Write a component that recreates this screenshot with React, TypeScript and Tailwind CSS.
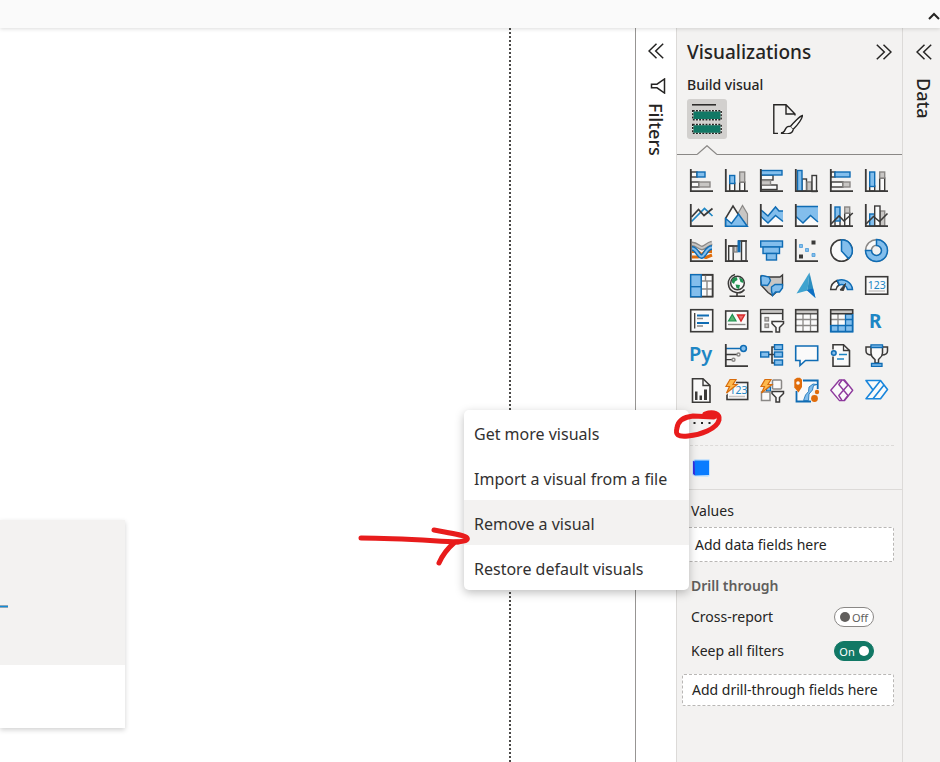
import React, { useState } from 'react';
import clsx from 'clsx';

const DARK = '#3b3a39';
const BLUE = '#0f6cb4';
const SKY = '#83beec';
const GRAY = '#c8c6c4';
const MID = '#8a8886';
const WHITE = '#fafafa';
const ORANGE = '#e06c0a';
const TEAL = '#1e86c4';

interface BarProps {
  x: number;
  y: number;
  w: number;
  h: number;
  tone?: 'white' | 'blue' | 'gray';
}

const Bar: React.FC<BarProps> = ({ x, y, w, h, tone = 'white' }) => {
  const fill = { white: WHITE, blue: SKY, gray: GRAY }[tone];
  const stroke = { white: DARK, blue: BLUE, gray: MID }[tone];
  return <rect x={x} y={y} width={w} height={h} fill={fill} stroke={stroke} strokeWidth="1.4" />;
};

const Axis = () => <path d="M.8 0V22.2H23" fill="none" stroke={DARK} strokeWidth="1.8" />;

const Bolt = () => <path d="M5 .5h6L8 5.5h4L1.5 14l3-6.5H1z" fill="#fdb94d" stroke="#d86c0b" strokeWidth="1.2" />;

const Funnel = () => (
  <path d="M12 12.5h11.500v2l-4 4V23h-3.500v-4.500l-4-4z" fill={WHITE} stroke={DARK} strokeWidth="1.5" />
);

interface Visual {
  name: string;
  art: React.ReactNode;
}

const visuals: Visual[] = [
  {
    name: 'Stacked bar chart',
    art: <><Bar x={1} y={3} w={6} h={5} /><Bar x={7} y={3} w={8} h={5} tone="blue" /><Bar x={1} y={13} w={8} h={5} /><Bar x={9} y={13} w={11} h={5} tone="gray" /><Axis /></>
  },
  {
    name: 'Stacked column chart',
    art: <><Bar x={4.7} y={14} w={5} h={8} /><Bar x={4.7} y={6.5} w={5} h={8} tone="blue" /><Bar x={14.7} y={13} w={5} h={9} /><Bar x={14.7} y={3} w={5} h={10} tone="gray" /><Axis /></>
  },
  {
    name: 'Clustered bar chart',
    art: <><Bar x={1} y={6} w={12} h={5} /><Bar x={1} y={16} w={16} h={4.5} /><Bar x={1} y={11.5} w={9.5} h={4.5} tone="gray" /><Bar x={1} y={1.5} w={21} h={4.5} tone="blue" /><Axis /></>
  },
  {
    name: 'Clustered column chart',
    art: <><Bar x={7} y={10} w={4.5} h={12} /><Bar x={12} y={13} w={4.5} h={9} tone="gray" /><Bar x={17} y={6.5} w={4.5} h={16} /><Bar x={2.5} y={1.5} w={4.5} h={20.5} tone="blue" /><Axis /></>
  },
  {
    name: '100% stacked bar chart',
    art: <><Bar x={1} y={3} w={4} h={5} /><Bar x={5} y={3} w={15} h={5} tone="blue" /><Bar x={1} y={13} w={12} h={5} /><Bar x={13} y={13} w={7} h={5} tone="gray" /><Axis /></>
  },
  {
    name: '100% stacked column chart',
    art: <><Bar x={4.7} y={17} w={5} h={5} /><Bar x={4.7} y={3} w={5} h={14.5} tone="blue" /><Bar x={14.7} y={9} w={5} h={13} /><Bar x={14.7} y={3} w={5} h={6} tone="gray" /><Axis /></>
  },
  {
    name: 'Line chart',
    art: (
      <>
        <path d="M1.500 17.500 14.500 4.500 22.500 12" fill="none" stroke={TEAL} strokeWidth="1.700" />
        <path d="M1.500 13 8.500 5.500 14 11.500 22.500 4.500" fill="none" stroke={DARK} strokeWidth="1.700" />
        <Axis />
      </>
    )
  },
  {
    name: 'Area chart',
    art: (
      <>
        <path d="M11 13 17.500 1.500 22.500 10V21H16z" fill={GRAY} stroke={MID} strokeWidth="1.200" />
        <path d="M.5 14.500 8 2 15 13V22H.5z" fill={WHITE} stroke={DARK} strokeWidth="1.500" />
        <path d="M.7 14.500 6.500 19.500 13.500 10 22.300 22.200H.7z" fill={SKY} stroke={BLUE} strokeWidth="1.500" />
      </>
    )
  },
  {
    name: 'Stacked area chart',
    art: (
      <>
        <path d="M1 12 8 19 15 12 22.500 18V22H1z" fill={WHITE} />
        <path d="M1 6 8 12 15.500 3 19 7H23V17.500L15.500 11.500 8 19 1 12.500z" fill={SKY} />
        <path d="M1 6 8 12 15.500 3 19 7H23M23 17.500 15.500 11.500 8 19 1 12.500" fill="none" stroke={BLUE} strokeWidth="1.500" />
        <Axis />
      </>
    )
  },
  {
    name: '100% stacked area chart',
    art: (
      <>
        <path d="M1 12V22H23V17z" fill={WHITE} />
        <path d="M1 2.500H23V18L15.500 11.500 8 19 1 12.500z" fill={SKY} />
        <path d="M1 2.500H23M23 18 15.500 11.500 8 19 1 12.500" fill="none" stroke={BLUE} strokeWidth="1.500" />
        <Axis />
      </>
    )
  },
  {
    name: 'Line and stacked column chart',
    art: (
      <>
        <Bar x={5} y={16} w={5} h={6} /><Bar x={5} y={3} w={5} h={14} tone="blue" />
        <Bar x={14.7} y={9} w={5} h={13} /><Bar x={14.7} y={3} w={5} h={6} tone="gray" />
        <path d="M1 20 9 12 14 17 22.800 9" fill="none" stroke={DARK} strokeWidth="1.600" />
        <Axis />
      </>
    )
  },
  {
    name: 'Line and clustered column chart',
    art: (
      <>
        <Bar x={4.7} y={10} w={5} h={12} tone="blue" /><Bar x={15} y={7} w={4.7} h={15} tone="gray" />
        <Bar x={9.7} y={2} w={5.3} h={20} />
        <path d="M1 20 8.500 12.500 14.500 17.500 22.500 9.500" fill="none" stroke={DARK} strokeWidth="1.600" />
        <Axis />
      </>
    )
  },
  {
    name: 'Ribbon chart',
    art: (
      <>
        <path d="M2 12.500H7C10 12.500 13 19 16 18.500L22 16" fill="none" stroke={ORANGE} strokeWidth="3" />
        <path d="M2 18H8C12 18 13 11.500 17 12.500H22" fill="none" stroke={ORANGE} strokeWidth="3" />
        <path d="M2 5C7 5 9 9 12 9S17 5 22 4" fill="none" stroke={MID} strokeWidth="4.800" />
        <path d="M2 5C7 5 9 9 12 9S17 5 22 4" fill="none" stroke={GRAY} strokeWidth="2" />
        <path d="M2 9.500C7 9.500 8 17.500 11.500 17.500S16 8.500 22 8.500" fill="none" stroke={BLUE} strokeWidth="4.800" />
        <path d="M2 9.500C7 9.500 8 17.500 11.500 17.500S16 8.500 22 8.500" fill="none" stroke={SKY} strokeWidth="2" />
        <Axis />
      </>
    )
  },
  {
    name: 'Waterfall chart',
    art: (
      <>
        <Bar x={3.7} y={7} w={4.5} h={15} /><Bar x={9} y={7} w={3} h={6} tone="gray" />
        <Bar x={16.5} y={2} w={4.5} h={20} />
        <path d="M3 7H13M13 2H22" stroke={DARK} strokeWidth="1.400" />
        <rect x="12.500" y="1.300" width="3" height="12" fill={BLUE} />
        <Axis />
      </>
    )
  },
  {
    name: 'Funnel',
    art: <><Bar x={0.7} y={2} w={21.8} h={6} tone="blue" /><Bar x={3} y={8} w={16.5} h={6.5} tone="blue" /><Bar x={6.5} y={14.5} w={10} h={6.5} tone="blue" /></>
  },
  {
    name: 'Scatter chart',
    art: (
      <>
        <path d="M16.500 1.500h4v4h-4zM4 15.500h4v4h-4z" fill={DARK} />
        <path d="M4.500 5.500h3v3h-3zM10.500 9.500h3v3h-3zM17 14.500h3v3h-3z" fill={SKY} stroke="#4a9bd8" strokeWidth=".8" />
        <Axis />
      </>
    )
  },
  {
    name: 'Pie chart',
    art: (
      <>
        <circle cx="11.500" cy="11.500" r="10.700" fill={WHITE} stroke={DARK} strokeWidth="1.600" />
        <path d="M11.500.8A10.700 10.700 0 0 1 18.500 19.600L11.500 12z" fill={SKY} stroke={BLUE} strokeWidth="1.500" />
      </>
    )
  },
  {
    name: 'Donut chart',
    art: (
      <>
        <circle cx="11.500" cy="11.500" r="8" fill="none" stroke={MID} strokeWidth="7.200" />
        <circle cx="11.500" cy="11.500" r="8" fill="none" stroke={WHITE} strokeWidth="4.200" />
        <path d="M11.500.5A11 11 0 1 1 .5 11.500H6.500A5 5 0 1 0 11.500 6.500z" fill={SKY} stroke={BLUE} strokeWidth="1.500" />
      </>
    )
  },
  {
    name: 'Treemap',
    art: (
      <>
        <Bar x={11} y={1} w={11.5} h={21.5} />
        <path d="M11 7H22.500M17 7V22M11 15H17M17 15H22.500M15.500 1V7" stroke={MID} strokeWidth="1.400" />
        <rect x=".7" y=".7" width="22" height="22" fill="none" stroke={DARK} strokeWidth="1.600" />
        <Bar x={0.7} y={0.7} w={10.5} h={12} tone="blue" /><Bar x={0.7} y={12.7} w={10.5} h={10} tone="blue" />
      </>
    )
  },
  {
    name: 'Map',
    art: (
      <>
        <circle cx="12.500" cy="9" r="6.800" fill={WHITE} stroke={DARK} strokeWidth="1.500" />
        <path d="M7 6C8 3.500 11 3 12 3.500L12.500 6 10 7.500 9 10 7 8.500zM14 3.500 17.500 5 18.500 9 15.500 8zM10.500 10.500 15 11 14 15 11.500 14z" fill="#1f9150" />
        <path d="M10 .5C1 3 1 16.500 11 18.500 15 19.500 18 17.500 19.500 15.500M12 18.500V22M4.500 22.300H20" fill="none" stroke={DARK} strokeWidth="1.600" />
      </>
    )
  },
  {
    name: 'Filled map',
    art: (
      <>
        <path d="M1 2 9 3H20L22.500 1V12L17 17.500 12.500 21.500 8 18.500 1 11z" fill={GRAY} stroke={DARK} strokeWidth="1.400" />
        <path d="M.8 3.500 2 1.500 9 3 10.500 6.500 9 9.500 7.500 11.500 1.500 11z" fill={SKY} stroke={BLUE} strokeWidth="1.400" />
        <path d="M11.500 13 15 10.500H22.500V14L19.500 18 15.500 18 12.500 21.500 11.500 17z" fill={SKY} stroke={BLUE} strokeWidth="1.400" />
      </>
    )
  },
  {
    name: 'Azure map',
    art: (
      <>
        <path d="M14.500-1.500 1.500 19.500 12.500 16.500z" fill="#3fa3cf" />
        <path d="M14.500-1.500 20.500 24 12.500 16.500z" fill="#2d8fc0" />
        <path d="M11.500 16 18 14.500 20.500 24z" fill="#0f70c4" />
      </>
    )
  },
  {
    name: 'Gauge',
    art: (
      <>
        <path d="M.7 15.500A10.800 10.300 0 0 1 7 6.500L9 11A6 6 0 0 0 6 15.500z" fill={WHITE} stroke={DARK} strokeWidth="1.500" />
        <path d="M7.500 6.500A11 10.500 0 0 1 22.500 15.500H17.500A6 6 0 0 0 9.500 11z" fill={SKY} stroke={BLUE} strokeWidth="1.500" />
        <path d="M10 16 15.500 9.500 13.500 16.500z" fill={DARK} stroke={DARK} strokeWidth="1" />
      </>
    )
  },
  {
    name: 'Card',
    art: (
      <>
        <rect x=".7" y="2.700" width="22" height="17.500" fill={WHITE} stroke={DARK} strokeWidth="1.600" />
        <text x="11.700" y="14.500" textAnchor="middle" fontSize="10.500" fill={TEAL}>123</text>
        <path d="M3.500 17H20" stroke={GRAY} strokeWidth="1.500" />
      </>
    )
  },
  {
    name: 'Multi-row card',
    art: (
      <>
        <rect x=".7" y=".7" width="22" height="22" fill={WHITE} stroke={DARK} strokeWidth="1.600" />
        <path d="M4.700 4V19.500" stroke={DARK} strokeWidth="1.300" />
        <path d="M7 6.500H19M7 14H19" stroke={BLUE} strokeWidth="2.200" />
        <path d="M7 9.500H13M7 17H13" stroke={MID} strokeWidth="1.500" />
      </>
    )
  },
  {
    name: 'KPI',
    art: (
      <>
        <rect x=".7" y="2" width="22" height="18" fill={WHITE} stroke={DARK} strokeWidth="1.600" />
        <path d="M3.500 12 7.300 5.500 11 12z" fill="#5bb772" stroke="#1f9150" strokeWidth="1.200" />
        <path d="M12.500 6H19.500L16 12z" fill="#ee6c6c" stroke="#d62b2b" strokeWidth="1.400" />
        <path d="M3 15.500H20.500" stroke={MID} strokeWidth="1.400" />
      </>
    )
  },
  {
    name: 'Slicer',
    art: (
      <>
        <rect x=".7" y=".7" width="22" height="22" fill={WHITE} stroke={DARK} strokeWidth="1.600" />
        <path d="M1.400 1.400H22V4H1.400z" fill={GRAY} />
        <path d="M1 4.500H22.500" stroke={DARK} strokeWidth="1.300" />
        <rect x="5" y="8.500" width="3.500" height="3.500" fill={GRAY} stroke={MID} strokeWidth="1.300" />
        <rect x="5" y="15" width="3.500" height="3.500" fill={GRAY} stroke={MID} strokeWidth="1.300" />
        <path d="M10.500 11H24.500V24H13z" fill="#f3f2f1" />
        <Funnel />
      </>
    )
  },
  {
    name: 'Table',
    art: (
      <>
        <rect x=".7" y=".7" width="22" height="22" fill={WHITE} />
        <path d="M1 1H22V4.500H1z" fill={GRAY} />
        <path d="M1 10.500H22.500M1 16.500H22.500M8 5V22.500M15.500 5V22.500" stroke={MID} strokeWidth="1.300" />
        <rect x=".7" y=".7" width="22" height="22" fill="none" stroke={DARK} strokeWidth="1.600" />
        <path d="M1 4.800H22.500" stroke={DARK} strokeWidth="1.300" />
      </>
    )
  },
  {
    name: 'Matrix',
    art: (
      <>
        <rect x=".7" y=".7" width="22" height="22" fill={WHITE} />
        <path d="M1 1H22V4.500H1z" fill={GRAY} />
        <path d="M1 10.500H15.500M8 5V16.500" stroke={MID} strokeWidth="1.300" />
        <path d="M15.500 5H22.500V22.500H1V16.500H15.500z" fill={SKY} stroke={BLUE} strokeWidth="1.300" />
        <path d="M15.500 10.500H22.500M15.500 16.500H22.500M8 16.500V22.500M15.500 16.500V22.500" stroke={BLUE} strokeWidth="1.300" />
        <path d="M.7 16V.7H22.700V5M.7 4.800H22.700" fill="none" stroke={DARK} strokeWidth="1.600" />
        <path d="M22.700 5V22.700H.7V16" fill="none" stroke={BLUE} strokeWidth="1.600" />
      </>
    )
  },
  {
    name: 'R script visual',
    art: <text x="4" y="18.500" fontSize="19" fontWeight="700" fill={TEAL}>R</text>
  },
  {
    name: 'Python visual',
    art: <text x="-1" y="17" fontSize="20" fontWeight="600" fill={TEAL}>Py</text>
  },
  {
    name: 'Key influencers',
    art: (
      <>
        <path d="M1 4.500H16" stroke={BLUE} strokeWidth="1.500" />
        <path d="M1 10.500H12M1 15.700H7" stroke={DARK} strokeWidth="1.300" />
        <circle cx="18.500" cy="4.500" r="2.900" fill={SKY} stroke={BLUE} strokeWidth="1.500" />
        <circle cx="13.500" cy="10.500" r="1.500" fill={WHITE} stroke={MID} strokeWidth="1.400" />
        <circle cx="8.500" cy="15.700" r="1.500" fill={WHITE} stroke={MID} strokeWidth="1.400" />
        <Axis />
      </>
    )
  },
  {
    name: 'Decomposition tree',
    art: (
      <>
        <path d="M8 10.500H15M15 3H12V19H15" fill="none" stroke={DARK} strokeWidth="1.600" />
        <Bar x={0.7} y={8} w={8} h={5} tone="blue" />
        <Bar x={14.5} y={0.7} w={8} h={5} tone="blue" /><Bar x={14.5} y={8} w={8} h={5} tone="blue" /><Bar x={14.5} y={16} w={8} h={5} tone="blue" />
      </>
    )
  },
  {
    name: 'Q&A',
    art: <path d="M.7 2H22.700V16.500H10.500L5 21.500V16.500H.7z" fill={WHITE} stroke={BLUE} strokeWidth="1.600" />
  },
  {
    name: 'Smart narrative',
    art: (
      <>
        <path d="M3 .7H13.500L19.500 6.500V22.300H3z" fill={WHITE} stroke={DARK} strokeWidth="1.600" />
        <path d="M13.500.7V6.500H19.500" fill="none" stroke={DARK} strokeWidth="1.300" />
        <path d="M9 10.500H17M7 15H14" stroke={TEAL} strokeWidth="1.500" />
        <path d="M2 5.500H5V12.500H2z" fill="#f3f2f1" />
        <circle cx="3.800" cy="9" r="2.300" fill={SKY} stroke={BLUE} strokeWidth="1.500" />
      </>
    )
  },
  {
    name: 'Goals',
    art: (
      <>
        <path d="M6 3H1V7C1 10.500 4 11 7 11M17.500 3H22.500V7C22.500 10.500 19.500 11 16.500 11" fill="none" stroke={DARK} strokeWidth="1.500" />
        <path d="M6 2.500H17.500V9C17.500 13 14 14.500 13.500 15.500V19H10V15.500C9 14.500 6 13 6 9z" fill={WHITE} stroke={DARK} strokeWidth="1.500" />
        <path d="M6 .8H17.500V3.500H6zM6.500 19.500H17V22.300H6.500z" fill={SKY} stroke={BLUE} strokeWidth="1.300" />
      </>
    )
  },
  {
    name: 'Paginated report',
    art: (
      <>
        <path d="M2.500-.3H13L20 6.500V23.300H2.500z" fill={WHITE} stroke={DARK} strokeWidth="1.600" />
        <path d="M13 0V6.500H20" fill="none" stroke={DARK} strokeWidth="1.400" />
        <path d="M5 12.500h2.500V21H5zM9.500 16.500H12V21H9.500zM14 10.500h3V21h-3z" fill={DARK} />
      </>
    )
  },
  {
    name: 'Card (new)',
    art: (
      <>
        <rect x="2" y="3.500" width="20.700" height="17" fill={WHITE} stroke={DARK} strokeWidth="1.600" />
        <path d="M-1-2H12L10 8 0 17z" fill="#f3f2f1" />
        <text x="13.500" y="15" textAnchor="middle" fontSize="10.500" fill={TEAL}>123</text>
        <path d="M4 17.500H20" stroke={GRAY} strokeWidth="1.500" />
        <Bolt />
      </>
    )
  },
  {
    name: 'Slicer (new)',
    art: (
      <>
        <rect x="12.500" y="1" width="9" height="9" rx="1" fill={WHITE} stroke={MID} strokeWidth="1.500" />
        <rect x="6.500" y="8" width="4" height="4" fill={SKY} stroke={BLUE} strokeWidth="1.200" />
        <rect x="1.500" y="13" width="8.500" height="8.500" fill={WHITE} stroke={MID} strokeWidth="1.500" />
        <Bolt />
        <Funnel />
      </>
    )
  },
  {
    name: 'ArcGIS map',
    art: (
      <>
        <path d="M2 2H22.500V9L18 12 15.500 22.300H1.500V9z" fill={WHITE} />
        <path d="M8 1.500H22.700V10M1.500 12V22.500H16" fill="none" stroke={BLUE} strokeWidth="1.800" />
        <path d="M22 5.500 18.500 6.500 17.500 11 14 15 13.500 21.500H8.500L10.500 16 13.500 12.500 14 8 18 5z" fill={SKY} stroke={BLUE} strokeWidth=".8" />
        <path d="M-.7.500 2-1.200H5L7 .8V8L3.500 13.500-.7 8.500z" fill={ORANGE} />
        <circle cx="3" cy="4" r="1.800" fill={WHITE} />
        <circle cx="19.500" cy="19.500" r="4.300" fill="#f3f2f1" />
        <circle cx="19.500" cy="19.500" r="3.400" fill={ORANGE} />
        <circle cx="22" cy="13" r="2.200" fill={ORANGE} />
      </>
    )
  },
  {
    name: 'Power Apps',
    art: (
      <g fill={WHITE} stroke="#8e3a9d" strokeWidth="1.400" strokeLinejoin="round">
        <path d="M9.500 1H14.500L22.700 11.300 14.500 21.600H9.500L.8 11.300z" />
        <path d="M12 1 8.800 5.500 18 16.500 14 21.500M13.500 1 18 6 8.800 16.500 12 21.500" fill="none" />
      </g>
    )
  },
  {
    name: 'Power Automate',
    art: (
      <g fill={WHITE} stroke="#1a86dc" strokeWidth="1.600" strokeLinejoin="round">
        <path d="M1 1.500H15.500L22.500 10.500 15.500 19.800H1L8 11z" />
        <path d="M8 11 15.500 1.500M8 19.800 19 6" fill="none" />
      </g>
    )
  }
];

const DoubleChevron: React.FC<{ direction: 'left' | 'right' }> = ({ direction }) => (
  <svg width="16" height="16" viewBox="0 0 16 16" fill="none" stroke="#252423" strokeWidth="1.500">
    <path d={direction === 'left' ? 'M8.500.8 1 8l7.500 7.200M15.200.8 7.700 8l7.500 7.200' : 'M7.500.8 15 8l-7.500 7.200M.8.8 8.300 8 .8 15.200'} />
  </svg>
);

interface SwitchProps {
  label: string;
  checked: boolean;
  onChange: (value: boolean) => void;
}

const SwitchRow: React.FC<SwitchProps> = ({ label, checked, onChange }) => (
  <label className="flex h-[34px] cursor-pointer items-center justify-between pl-[9px] pr-5 text-sm">
    {label}
    <input type="checkbox" className="sr-only" checked={checked} onChange={(e) => onChange(e.target.checked)} />
    <span
      className={clsx(
        'flex h-5 w-10 items-center justify-center rounded-full border text-[11px] leading-none',
        checked ? 'flex-row-reverse gap-1 border-[#117865] bg-[#117865] text-white' : 'gap-0.5 border-[#8a8886] bg-white text-[#605e5c]'
      )}
    >
      <span className={clsx('h-[10px] w-[10px] rounded-full', checked ? 'bg-white' : 'bg-[#605e5c]')}></span>
      {checked ? 'On' : 'Off'}
    </span>
  </label>
);

const menuItems = ['Get more visuals', 'Import a visual from a file', 'Remove a visual', 'Restore default visuals'];

const VisualsMenu = () => (
  <div role="menu" className="absolute right-full top-0 z-10 mr-px w-[225px] overflow-hidden rounded-[5px] bg-white shadow-[0_3px_10px_rgba(0,0,0,0.25)]">
    {menuItems.map((item) => (
      <button
        key={item}
        role="menuitem"
        className={clsx('block h-[45px] w-full whitespace-nowrap px-[10px] pt-0.5 text-left text-base text-[#323130]', item === 'Remove a visual' && 'bg-[#f3f2f1]')}
      >
        {item}
      </button>
    ))}
  </div>
);

// Hand-drawn marks: arrow at the menu item, loop round the dots
const PenMarks = () => (
  <svg
    width="380"
    height="180"
    viewBox="0 0 380 180"
    fill="none"
    stroke="#e81c1c"
    strokeWidth="5"
    strokeLinecap="round"
    strokeLinejoin="round"
    className="pointer-events-none absolute -left-[340px] -top-[10px] z-20 max-w-none"
  >
    <path d="M11 138C45 138 70 140 108 142" />
    <path d="M84 130C100 133 115 135 117 138S109 142 105 142C98 148 92 156 89 163" />
    <path d="M355 14C364 11 370 14 369 20 367 29 350 35 338 36 328 37 325 35 327 28 328 20 334 17 343 16L364 17" />
  </svg>
);

const VisualizationsPane = () => {
  const [crossReport, setCrossReport] = useState(false);
  const [keepFilters, setKeepFilters] = useState(true);

  return (
    <section className="w-[226px] shrink-0 border-l border-[#dcdad8] bg-[#f3f2f1]">
      <div className="flex h-12 items-center justify-between px-[10px]">
        <h2 className="text-[19px] font-medium">Visualizations</h2>
        <button aria-label="Collapse Visualizations"><DoubleChevron direction="right" /></button>
      </div>
      <h3 className="h-[18px] px-[10px] text-sm font-medium leading-[18px]">Build visual</h3>

      <div role="tablist" className="mt-[5px] flex gap-[41px] px-[10px]">
        <button role="tab" aria-selected="true" aria-label="Build visual" className="flex h-10 w-10 items-center justify-center rounded-[3px] bg-[#d2d0ce]">
          <svg width="30" height="30" viewBox="0 0 30 30" fill="#117865" stroke="#252423">
            <path d="M0 .8H24" strokeWidth="1.500" />
            <rect x=".7" y="6.700" width="28.500" height="9" stroke="#f3f2f1" strokeWidth="1.400" />
            <rect x=".7" y="6.700" width="28.500" height="9" fill="none" strokeWidth="1.400" strokeDasharray="2 1.200" />
            <rect x=".7" y="20.500" width="28.500" height="9" stroke="#f3f2f1" strokeWidth="1.400" />
            <rect x=".7" y="20.500" width="28.500" height="9" fill="none" strokeWidth="1.400" strokeDasharray="2 1.200" />
          </svg>
        </button>
        <button role="tab" aria-selected="false" aria-label="Format visual" className="flex h-10 w-10 items-center justify-center">
          <svg width="30" height="30" viewBox="0 0 30 30" fill="none" stroke="#252423" strokeWidth="1.400">
            <path d="M5 29.500H.8V.7H13L22 10V11.500M13 .7V10H22" />
            <path d="M29.500 11.500C27 12 20 19 17 23L20 25.500C24 21.500 29 15 29.500 11.500z" fill={WHITE} />
            <path d="M17 22.500C13 21.500 12.500 25 11.500 27 10.500 28.500 9 29 8 29 12 30.500 20 30.500 20 25.500" fill={WHITE} />
          </svg>
        </button>
      </div>
      <div className="mt-[6px] flex">
        <div className="w-5 border-b border-[#8a8886]"></div>
        <svg width="20" height="10" viewBox="0 0 20 10" fill="none" stroke="#8a8886" strokeWidth="1.200">
          <path d="M0 9.500 10 .7 20 9.500" />
        </svg>
        <div className="flex-1 border-b border-[#8a8886]"></div>
      </div>

      <div className="ml-[13px] mr-0.5 mt-[14px] grid grid-cols-6 justify-items-start gap-y-[11px]">
        {visuals.map((visual) => (
          <button key={visual.name} aria-label={visual.name} className="h-6 w-6">
            <svg width="24" height="24" viewBox="0 0 24 24" className="overflow-visible">{visual.art}</svg>
          </button>
        ))}
      </div>

      <div className="relative mx-[13px] mt-[7px] flex h-[26px] items-center">
        <button aria-label="Get more visuals" className="flex h-5 w-6 items-center justify-center">
          <svg width="18" height="4" viewBox="0 0 18 4" fill="#252423">
            <path d="M.5 1h2v2h-2zM8 1h2v2H8zM15.500 1h2v2h-2z" />
          </svg>
        </button>
        <VisualsMenu />
        <PenMarks />
      </div>
      <div className="mx-2 mt-[9px] border-t border-dashed border-[#dcdad8]"></div>
      <div className="flex h-[43px] items-center px-[15px]">
        <button aria-label="Custom visual">
          <svg width="18" height="18" viewBox="0 0 18 18">
            <path d="M0 2 3 0H17L18 1V16L16 18 3 17.500 0 16z" fill="#b4dcff" opacity=".7" />
            <path d="M1 2 3 2.500V16.500L1 15z" fill="#3b2be0" />
            <path d="M2.500 1.500H17V16L3 16.500z" fill="#0a7cff" />
          </svg>
        </button>
      </div>

      <div className="border-t border-[#dcdad8] pl-[5px] pr-2 pt-[11px] text-sm">
        <h4 className="px-[9px] leading-5">Values</h4>
        <div className="mt-[6px] flex h-[35px] items-center rounded-[2px] border border-dashed border-[#b9b7b5] bg-white px-3">Add data fields here</div>
        <h4 className="mt-[14px] px-[9px] font-semibold leading-5 text-[#605e5c]">Drill through</h4>
        <div className="mt-1">
          <SwitchRow label="Cross-report" checked={crossReport} onChange={setCrossReport} />
          <SwitchRow label="Keep all filters" checked={keepFilters} onChange={setKeepFilters} />
        </div>
        <div className="mt-[6px] flex h-8 items-center whitespace-nowrap rounded-[2px] border border-dashed border-[#b9b7b5] bg-white px-[9px]">Add drill-through fields here</div>
      </div>
    </section>
  );
};

const App = () => {
  return (
    <div className="flex min-h-screen flex-col bg-white font-['Segoe_UI','Noto_Sans',sans-serif] text-[#252423]">
      <header className="relative z-10 flex h-7 items-end justify-end bg-[#fafafa] pb-2 shadow-[0_1px_4px_rgba(0,0,0,0.14)]">
        <button aria-label="Collapse ribbon">
          <svg width="12" height="8" viewBox="0 0 12 8" fill="none" stroke="#252423" strokeWidth="2">
            <path d="M1 7 6 2 11 7" />
          </svg>
        </button>
      </header>

      <div className="flex flex-1">
        <main className="flex flex-1">
          <div className="flex-1 border-r-2 border-dotted border-[#4a4947] pt-[492px]">
            <div className="w-[125px] shadow-[0_2px_5px_rgba(0,0,0,0.18)]">
              <div className="flex h-[145px] items-center bg-[#f3f2f1] pt-7">
                <div className="h-[3px] w-2 border-y border-[#8fa6b8] bg-[#118dd8]"></div>
              </div>
              <div className="h-[63px] bg-white"></div>
            </div>
          </div>
          <div className="w-[124px]"></div>
        </main>

        <aside className="flex w-[41px] shrink-0 flex-col items-center border-l border-[#979593] pt-[15px]">
          <button aria-label="Expand Filters"><DoubleChevron direction="left" /></button>
          <svg width="16" height="16" viewBox="0 0 16 16" fill="none" stroke="#252423" strokeWidth="1.500" className="ml-1 mt-[19px]">
            <path d="M14.500 1V15L7 9.800H1.500V6.200H7z" />
          </svg>
          <h2 className="mt-[9px] text-lg font-medium leading-5 [writing-mode:vertical-rl]">Filters</h2>
        </aside>

        <VisualizationsPane />

        <aside className="flex w-[38px] shrink-0 flex-col items-center border-l border-[#dcdad8] bg-[#f3f2f1] pl-1 pt-4">
          <button aria-label="Expand Data"><DoubleChevron direction="left" /></button>
          <h2 className="mt-[18px] text-lg font-medium leading-5 [writing-mode:vertical-rl]">Data</h2>
        </aside>
      </div>
    </div>
  );
};

export default App;
